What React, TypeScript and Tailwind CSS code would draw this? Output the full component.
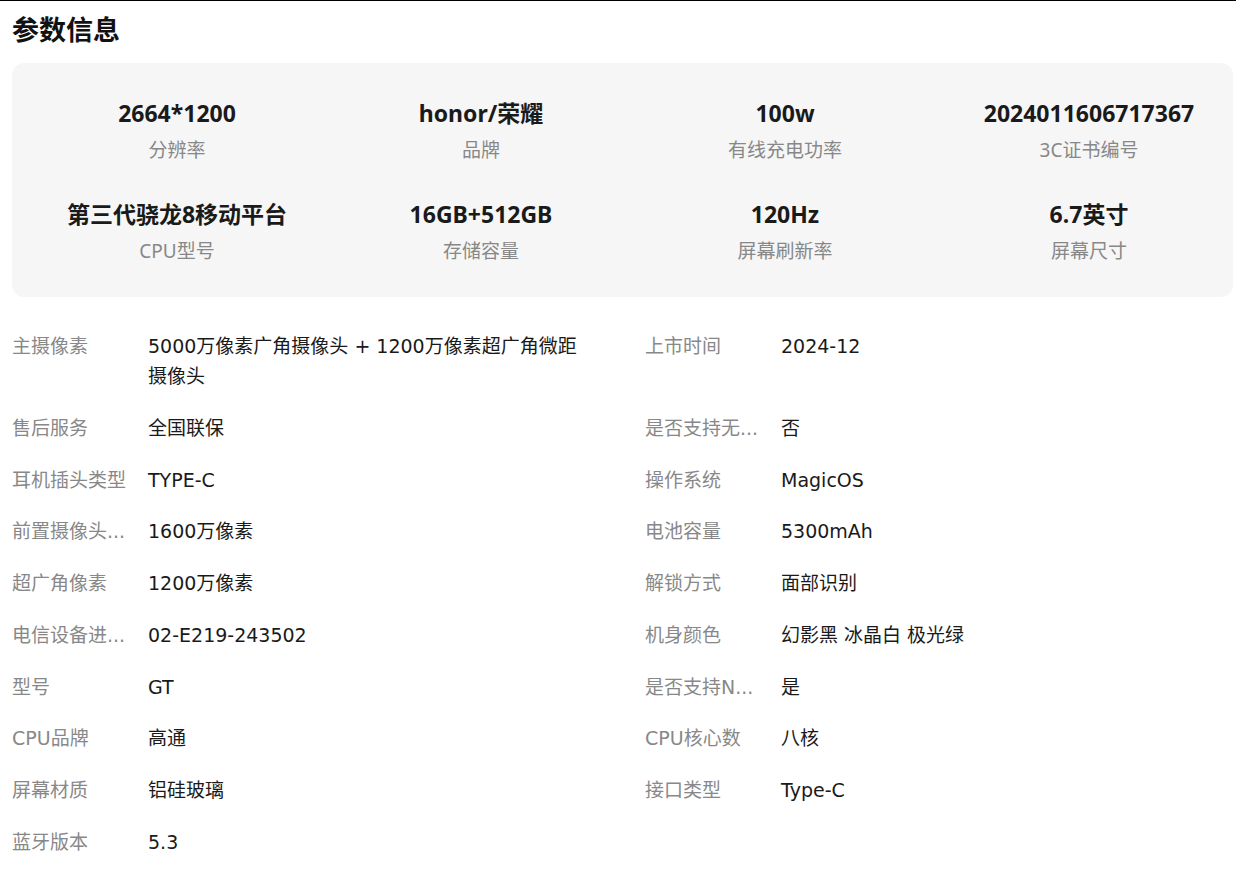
import React from "react";

const summary = [
  { value: "2664*1200", label: "分辨率" },
  { value: "honor/荣耀", label: "品牌" },
  { value: "100w", label: "有线充电功率" },
  { value: "2024011606717367", label: "3C证书编号" },
  { value: "第三代骁龙8移动平台", label: "CPU型号" },
  { value: "16GB+512GB", label: "存储容量" },
  { value: "120Hz", label: "屏幕刷新率" },
  { value: "6.7英寸", label: "屏幕尺寸" },
];

const specs = [
  { label: "主摄像素", value: "5000万像素广角摄像头 + 1200万像素超广角微距摄像头" },
  { label: "上市时间", value: "2024-12" },
  { label: "售后服务", value: "全国联保" },
  { label: "是否支持无线充电", value: "否" },
  { label: "耳机插头类型", value: "TYPE-C" },
  { label: "操作系统", value: "MagicOS" },
  { label: "前置摄像头像素", value: "1600万像素" },
  { label: "电池容量", value: "5300mAh" },
  { label: "超广角像素", value: "1200万像素" },
  { label: "解锁方式", value: "面部识别" },
  { label: "电信设备进网许可证编号", value: "02-E219-243502" },
  { label: "机身颜色", value: "幻影黑 冰晶白 极光绿" },
  { label: "型号", value: "GT" },
  { label: "是否支持NFC", value: "是" },
  { label: "CPU品牌", value: "高通" },
  { label: "CPU核心数", value: "八核" },
  { label: "屏幕材质", value: "铝硅玻璃" },
  { label: "接口类型", value: "Type-C" },
  { label: "蓝牙版本", value: "5.3" },
];

// labels longer than 6 chars get cut to 5 + "..."
const shortLabel = (s: string) => (s.length > 6 ? s.slice(0, 5) + "..." : s);

export default function App() {
  return (
    <div
      className="w-[1236px] h-[885px] overflow-hidden bg-white border-t border-black text-[#222]"
      style={{ fontFamily: '"Noto Sans", "Noto Sans CJK SC", sans-serif' }}
    >
      <div className="pl-[12px]">
        <h2 className="text-[27px] font-bold leading-[36px] pt-[11px] text-[#111]">参数信息</h2>

        {/* summary card */}
        <div className="mt-[15px] w-[1221px] h-[234px] rounded-[12px] bg-[#f6f6f6] pt-[35px] pl-[13px] overflow-hidden">
          <div className="grid grid-cols-[repeat(4,304px)] gap-y-[36px]">
            {summary.map((s) => (
              <div key={s.label} className="flex flex-col items-center">
                <div className="text-[23px] font-bold leading-[30px] text-[#1a1a1a] whitespace-nowrap">{s.value}</div>
                <div className="mt-[9px] text-[19px] leading-[26px] text-[#888]">{s.label}</div>
              </div>
            ))}
          </div>
        </div>

        {/* spec list */}
        <div
          className="mt-[34px] grid grid-cols-[633px_1fr] gap-y-[21.75px]"
          style={{ fontFamily: '"DejaVu Sans", "Noto Sans CJK SC", sans-serif' }}
        >
          {specs.map((s) => (
            <div key={s.label} className="flex items-start text-[19px] leading-[30px]">
              <div title={s.label} className="w-[118px] mr-[18px] shrink-0 whitespace-nowrap overflow-hidden text-[#888]">
                {shortLabel(s.label)}
              </div>
              <div className="max-w-[432px] text-[#1a1a1a]">{s.value}</div>
            </div>
          ))}
        </div>
      </div>
    </div>
  );
}
